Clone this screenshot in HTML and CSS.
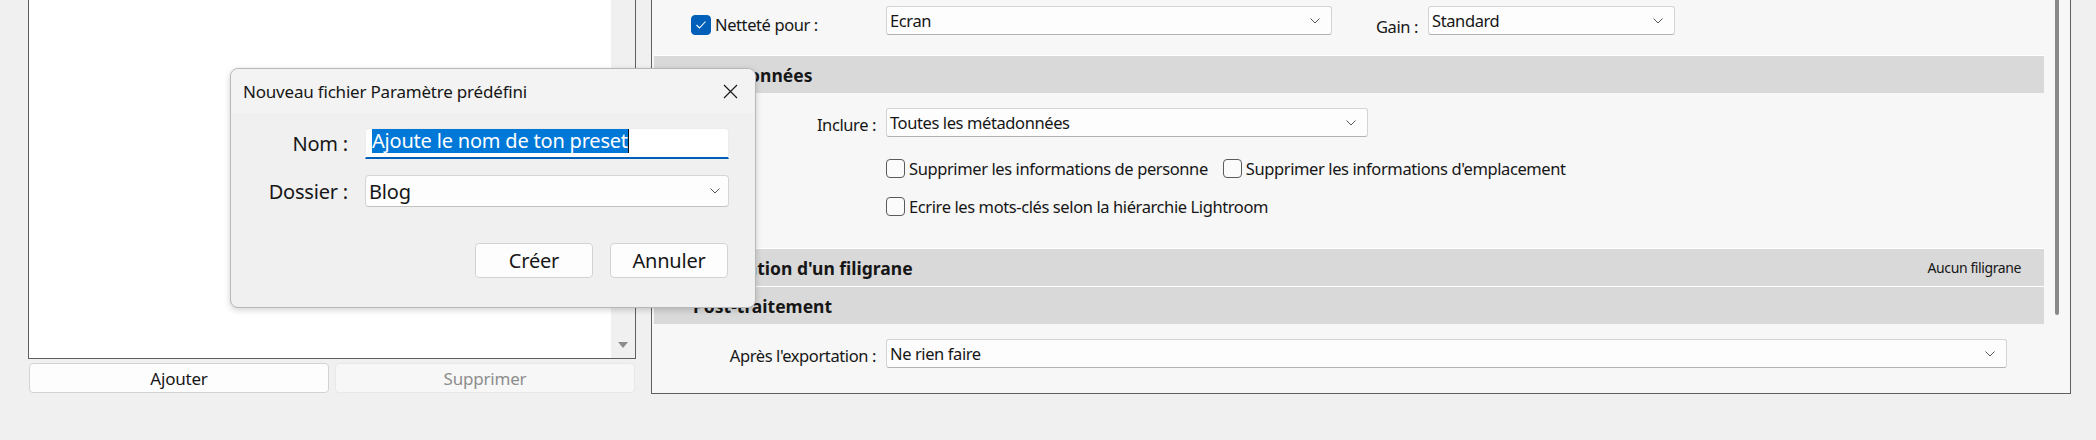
FILE: index.html
```html
<!DOCTYPE html>
<html lang="fr">
<head>
    <meta charset="UTF-8">
    <title>Exporter - Nouveau paramètre prédéfini</title>
    <link rel="stylesheet" href="styles.css">
</head>
<body>
    <div class="workspace">
        <div class="preset-column">
            <div class="preset-list">
                <div class="list-area"></div>
                <div class="list-scroll"><span class="scroll-arrow"></span></div>
            </div>
            <div class="list-buttons">
                <button class="btn">Ajouter</button>
                <button class="btn" disabled>Supprimer</button>
            </div>
        </div>

        <div class="export-panel">
            <div class="panel-content">
                <div class="sharpen-row">
                    <div class="check-label">
                        <span class="checkbox checked">
                            <svg width="12" height="10" viewBox="0 0 12 10"><polyline points="1.5,5 4.5,8 10.5,1.5" fill="none" stroke="#fff" stroke-width="1.1"/></svg>
                        </span>
                        <span>Netteté pour :</span>
                    </div>
                    <div class="select select-screen">
                        <span>Ecran</span>
                        <svg class="chevron" width="10" height="6" viewBox="0 0 10 6"><polyline points="0.5,0.5 5,5 9.5,0.5" fill="none" stroke="#555" stroke-width="1"/></svg>
                    </div>
                    <span class="gain-label">Gain :</span>
                    <div class="select select-gain">
                        <span>Standard</span>
                        <svg class="chevron" width="10" height="6" viewBox="0 0 10 6"><polyline points="0.5,0.5 5,5 9.5,0.5" fill="none" stroke="#555" stroke-width="1"/></svg>
                    </div>
                </div>

                <div class="section-head">
                    <svg class="twisty" width="8" height="5" viewBox="0 0 8 5"><polygon points="0,0 8,0 4,5" fill="#333"/></svg>
                    <span>Métadonnées</span>
                </div>
                <div class="section-body meta-body">
                    <div class="field-row">
                        <span class="field-label">Inclure :</span>
                        <div class="select select-meta">
                            <span>Toutes les métadonnées</span>
                            <svg class="chevron" width="10" height="6" viewBox="0 0 10 6"><polyline points="0.5,0.5 5,5 9.5,0.5" fill="none" stroke="#555" stroke-width="1"/></svg>
                        </div>
                    </div>
                    <div class="check-row first">
                        <label class="option"><span class="checkbox"></span>Supprimer les informations de personne</label>
                        <label class="option"><span class="checkbox"></span>Supprimer les informations d'emplacement</label>
                    </div>
                    <div class="check-row">
                        <label class="option"><span class="checkbox"></span>Ecrire les mots-clés selon la hiérarchie Lightroom</label>
                    </div>
                </div>

                <div class="section-head">
                    <svg class="twisty" width="8" height="8" viewBox="0 0 8 8"><polygon points="2,0 7,4 2,8" fill="#333"/></svg>
                    <span>Application d'un filigrane</span>
                    <span class="summary">Aucun filigrane</span>
                </div>
                <div class="section-head">
                    <svg class="twisty" width="8" height="5" viewBox="0 0 8 5"><polygon points="0,0 8,0 4,5" fill="#333"/></svg>
                    <span>Post-traitement</span>
                </div>
                <div class="section-body post-body">
                    <div class="field-row">
                        <span class="field-label">Après l'exportation :</span>
                        <div class="select select-after">
                            <span>Ne rien faire</span>
                            <svg class="chevron" width="10" height="6" viewBox="0 0 10 6"><polyline points="0.5,0.5 5,5 9.5,0.5" fill="none" stroke="#555" stroke-width="1"/></svg>
                        </div>
                    </div>
                </div>
            </div>
            <div class="panel-scroll"><span class="thumb"></span></div>
        </div>
    </div>

    <div class="dialog">
        <div class="dialog-title">
            <span>Nouveau fichier Paramètre prédéfini</span>
            <svg width="15" height="15" viewBox="0 0 15 15"><path d="M1 1 L14 14 M14 1 L1 14" stroke="#1b1b1b" stroke-width="1.2"/></svg>
        </div>
        <div class="dialog-form">
            <span class="dialog-label">Nom :</span>
            <div class="text-field"><span class="selection">Ajoute le nom de ton preset</span><span class="caret"></span></div>
            <span class="dialog-label">Dossier :</span>
            <div class="select select-folder">
                <span>Blog</span>
                <svg class="chevron" width="10" height="6" viewBox="0 0 10 6"><polyline points="0.5,0.5 5,5 9.5,0.5" fill="none" stroke="#555" stroke-width="1"/></svg>
            </div>
        </div>
        <div class="dialog-actions">
            <button class="btn dialog-btn">Créer</button>
            <button class="btn dialog-btn">Annuler</button>
        </div>
    </div>
</body>
</html>
```

FILE: styles.css
```css
* {
    box-sizing: border-box;
}

body {
    position: relative;
    margin: 0;
    width: 2096px;
    height: 440px;
    overflow: hidden;
    background-color: #f0f0f0;
    font-family: 'Noto Sans', 'Open Sans', sans-serif;
    font-size: 16.5px;
    letter-spacing: -0.4px;
    color: #161616;
}

.workspace {
    display: flex;
    align-items: flex-start;
    gap: 15px;
    padding-left: 28px;
}

/* liste des paramètres prédéfinis */
.preset-column {
    width: 608px;
}

.preset-list {
    display: flex;
    height: 359px;
    border: 1px solid #5f5f5f;
    border-top: none;
}

.list-area {
    flex: 1;
    background: #fff;
}

.list-scroll {
    width: 24px;
    display: flex;
    align-items: flex-end;
    justify-content: center;
    padding-bottom: 10px;
    background: #f0f0f0;
}

.scroll-arrow {
    width: 0;
    height: 0;
    border-left: 5px solid transparent;
    border-right: 5px solid transparent;
    border-top: 6px solid #8c8c8c;
}

.list-buttons {
    display: flex;
    gap: 6px;
    margin-top: 4px;
    padding: 0 1px;
}

.btn {
    flex: 1;
    height: 30px;
    padding: 0;
    font-family: inherit;
    font-size: 17px;
    letter-spacing: -0.2px;
    color: #161616;
    background: #fdfdfd;
    border: 1px solid #d3d3d3;
    border-radius: 4px;
}

.btn:disabled {
    color: #8d8d8d;
    background: #f7f7f7;
    border-color: #e8e8e8;
}

/* panneau d'exportation */
.export-panel {
    display: flex;
    width: 1420px;
    height: 394px;
    background: #f7f7f7;
    border: 1px solid #5f5f5f;
    border-top: none;
}

.panel-content {
    flex: 1;
    padding-left: 2px;
}

.panel-scroll {
    width: 26px;
    padding-left: 11px;
}

.panel-scroll .thumb {
    display: block;
    width: 4px;
    height: 315px;
    background: #898989;
    border-radius: 0 0 2px 2px;
}

.sharpen-row {
    display: flex;
    align-items: flex-start;
    height: 55px;
}

.check-label {
    display: flex;
    align-items: center;
    gap: 4px;
    width: 232px;
    padding-left: 37px;
    margin-top: 13px;
}

.select {
    display: flex;
    align-items: center;
    justify-content: space-between;
    height: 29px;
    padding: 0 11px 0 3px;
    background: #fdfdfd;
    border: 1px solid #d4d4d4;
    border-bottom-color: #b2b2b2;
    border-radius: 3px;
}

.select-screen {
    width: 446px;
    margin-top: 6px;
}

.gain-label {
    margin: 15px 10px 0 44px;
}

.select-gain {
    width: 247px;
    margin-top: 6px;
}

.select-meta {
    width: 482px;
}

.select-after {
    width: 1121px;
}

.section-head {
    display: flex;
    align-items: center;
    height: 38px;
    padding-left: 15px;
    font-size: 17.5px;
    font-weight: bold;
    letter-spacing: 0;
    background: #d9d9d9;
    border-top: 1px solid #fff;
}

.section-head .twisty {
    margin-right: 16px;
}

.section-head .summary {
    margin-left: auto;
    margin-right: 23px;
    font-size: 14px;
    font-weight: normal;
    letter-spacing: -0.4px;
}

.section-body {
    padding-top: 15px;
}

.meta-body {
    height: 155px;
}

.field-row {
    display: flex;
    align-items: center;
}

.field-label {
    width: 232px;
    padding: 3px 10px 0 0;
    text-align: right;
}

.check-row {
    display: flex;
    align-items: center;
    gap: 15px;
    height: 21px;
    margin-top: 17px;
    padding-left: 232px;
}

.check-row.first {
    margin-top: 21px;
}

.option {
    display: flex;
    align-items: center;
    gap: 4px;
}

.checkbox {
    flex-shrink: 0;
    width: 19px;
    height: 19px;
    background: #fbfbfb;
    border: 1px solid #5a5a5a;
    border-radius: 4px;
}

.checkbox.checked {
    display: flex;
    align-items: center;
    justify-content: center;
    width: 20px;
    height: 20px;
    background: #005fb8;
    border-color: #005fb8;
}

/* boîte de dialogue */
.dialog {
    position: absolute;
    left: 230px;
    top: 68px;
    width: 526px;
    height: 240px;
    font-size: 20px;
    letter-spacing: -0.2px;
    background: #f0f0f0;
    border: 1px solid #b8b8b8;
    border-radius: 8px;
    box-shadow: 0 2px 6px rgba(0, 0, 0, 0.18);
}

.dialog-title {
    display: flex;
    align-items: center;
    justify-content: space-between;
    height: 44px;
    padding: 0 17px 0 12px;
    font-size: 17px;
    background: #f3f3f3;
    border-radius: 8px 8px 0 0;
}

.dialog-form {
    display: grid;
    grid-template-columns: 117px 364px;
    column-gap: 17px;
    row-gap: 16px;
    align-items: center;
    margin-top: 15px;
}

.dialog-label {
    text-align: right;
}

.text-field {
    display: flex;
    align-items: flex-start;
    height: 31px;
    padding-left: 6px;
    background: #fff;
    border: 1px solid #ececec;
    border-bottom: 2px solid #005fb8;
    border-radius: 4px 4px 0 0;
}

.selection {
    line-height: 24px;
    color: #fff;
    background: #0078d7;
}

.caret {
    width: 1px;
    height: 24px;
    background: #111;
}

.select-folder {
    height: 32px;
    padding-right: 8px;
    border-color: #d5d5d5;
    border-bottom-color: #c2c2c2;
    border-radius: 4px;
}

.dialog-actions {
    display: flex;
    justify-content: flex-end;
    gap: 17px;
    margin-top: 36px;
    padding-right: 27px;
}

.dialog-btn {
    flex: none;
    width: 118px;
    height: 35px;
    font-size: 20px;
}
```
